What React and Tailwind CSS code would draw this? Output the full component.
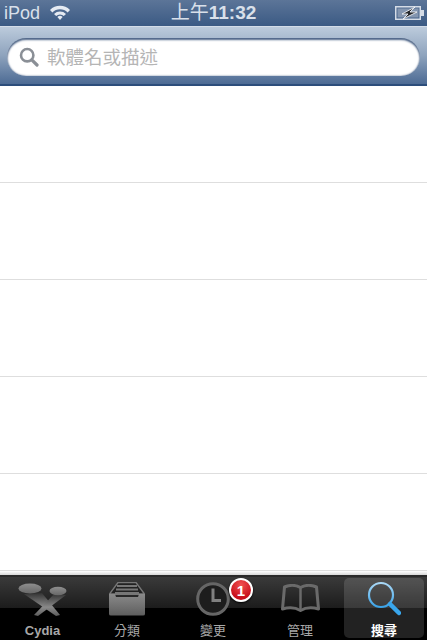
import React from "react";

const cjk = { fontFamily: '"Liberation Sans","Noto Sans CJK TC",sans-serif' };

function Wifi() {
  return (
    <svg width="22" height="16" viewBox="0 0 22 16" className="ml-[9px] mt-[-3px]">
      <path d="M1 6 A14 14 0 0 1 21 6 L18.6 8.4 A10.6 10.6 0 0 0 3.4 8.4 Z" fill="#e6ebf2" />
      <path d="M5 10 A8.6 8.6 0 0 1 17 10 L14.8 12 A5.4 5.4 0 0 0 7.2 12 Z" fill="#e6ebf2" />
      <path d="M8.4 13 A3.8 3.8 0 0 1 13.6 13 L11 16 Z" fill="#e6ebf2" />
    </svg>
  );
}

function Battery() {
  return (
    <svg width="29" height="14" viewBox="0 0 29 14">
      <rect x="0.75" y="0.75" width="24.5" height="12.5" fill="none" stroke="#d5dce6" strokeWidth="1.5" />
      <rect x="2.5" y="2.5" width="21" height="9" fill="#8496b0" />
      <rect x="26" y="4" width="3" height="6" fill="#d5dce6" />
      <path d="M20 1 L7 8 L13 8 L8 13 L22 6 L15 6 Z" fill="#26282c" stroke="#f0f3f7" strokeWidth="0.9" />
    </svg>
  );
}

function SearchGlass() {
  return (
    <svg width="20" height="20" viewBox="0 0 20 20">
      <circle cx="8.2" cy="8.2" r="6.2" fill="none" stroke="#8a8f96" strokeWidth="2.6" />
      <path d="M12.8 12.8 L18 18" stroke="#8a8f96" strokeWidth="3.2" strokeLinecap="round" />
    </svg>
  );
}

function CydiaIcon() {
  return (
    <svg width="54" height="36" viewBox="0 0 54 36">
      <defs>
        <linearGradient id="cyA" x1="0" y1="0" x2="0" y2="1">
          <stop offset="0" stopColor="#333333" />
          <stop offset="0.6" stopColor="#8a8a8a" />
          <stop offset="1" stopColor="#5c5c5c" />
        </linearGradient>
        <linearGradient id="cyB" x1="0" y1="0" x2="0" y2="1">
          <stop offset="0" stopColor="#8e8e8e" />
          <stop offset="1" stopColor="#686868" />
        </linearGradient>
      </defs>
      <path d="M8 13 L26 12 L44 34 L40 35 Z" fill="url(#cyA)" />
      <path d="M38 13 L50 14 L22 35 L18 34 Z" fill="url(#cyA)" />
      <ellipse cx="14" cy="7.5" rx="11.5" ry="5" fill="url(#cyB)" />
      <ellipse cx="42" cy="10" rx="8.5" ry="4.200" fill="url(#cyB)" />
    </svg>
  );
}

function BoxIcon() {
  return (
    <svg width="36" height="34" viewBox="0 0 36 34">
      <defs>
        <linearGradient id="boxA" x1="0" y1="0" x2="0" y2="1">
          <stop offset="0" stopColor="#8a8a8a" />
          <stop offset="1" stopColor="#5e5e5e" />
        </linearGradient>
      </defs>
      <path d="M9 0.5 L27 0.5 L35.5 12 L0.5 12 Z" fill="#222" stroke="#777" strokeWidth="1.4" />
      <rect x="8" y="3" width="20" height="2" fill="#777" />
      <rect x="7" y="6.5" width="22" height="2" fill="#777" />
      <rect x="6" y="10" width="24" height="3" fill="#777" />
      <path d="M0 12 L6 12 L7 15 L29 15 L30 12 L36 12 L36 32 Q36 33.500 34 33.500 L2 33.500 Q0 33.500 0 32 Z" fill="url(#boxA)" />
    </svg>
  );
}

function ClockIcon() {
  return (
    <svg width="34" height="34" viewBox="0 0 34 34">
      <circle cx="17" cy="17" r="15.300" fill="#1d1d1d" stroke="#666" strokeWidth="3" />
      <path d="M17 6.500 L17 18.500 L25 18.500" fill="none" stroke="#808080" strokeWidth="3" />
    </svg>
  );
}

function BookIcon() {
  return (
    <svg width="39" height="29" viewBox="0 0 39 29">
      <path d="M3.500 3 Q12 -0.500 19.500 3.500 Q27 -0.500 35.500 3 L37.500 25 Q27 22 19.500 26.500 Q12 22 1.500 25 Z" fill="none" stroke="#6a6a6a" strokeWidth="3" strokeLinejoin="round" />
      <path d="M19.500 3.500 L19.500 26" stroke="#6a6a6a" strokeWidth="2.500" />
    </svg>
  );
}

function BlueGlass() {
  return (
    <svg width="34" height="36" viewBox="0 0 34 36">
      <defs>
        <linearGradient id="bg" x1="0" y1="0" x2="0" y2="1">
          <stop offset="0" stopColor="#a9d8f6" />
          <stop offset="1" stopColor="#3aa3e8" />
        </linearGradient>
      </defs>
      <circle cx="14" cy="14" r="12" fill="none" stroke="url(#bg)" strokeWidth="2.200" />
      <path d="M23 23 L32 32" stroke="#39a6ec" strokeWidth="4.500" strokeLinecap="round" />
    </svg>
  );
}

function Tab({ label, icon, active, bold, badge, width, color }) {
  return (
    <div
      className={`relative flex flex-col items-center rounded-[5px] ${width} ${active ? "bg-[#ffffff22]" : ""}`}
    >
      <div className="flex h-[41px] items-center justify-center">{icon}</div>
      <span
        className={`mt-[5px] text-[13px] leading-[14px] ${bold ? "font-bold" : ""} ${color}`}
        style={cjk}
      >
        {label}
      </span>
      {badge}
    </div>
  );
}

export default function App() {
  return (
    <div className="flex h-[640px] w-[427px] flex-col overflow-hidden bg-white" style={cjk}>
      <div className="relative flex h-[26px] items-center bg-gradient-to-b from-[#5c7598] to-[#3b5a84] pl-[4px] pr-[3px]">
        <span className="text-[18px] leading-[26px] text-[#d9e0ea]">iPod</span>
        <Wifi />
        <span className="absolute left-0 right-0 text-center text-[19px] leading-[26px] font-bold text-[#d9e0ea]">
          <span className="font-normal">上午</span>11:32
        </span>
        <div className="ml-auto flex items-center">
          <Battery />
        </div>
      </div>

      <div className="flex h-[60px] flex-col border-t border-[#d3dce8] border-b-2 border-b-[#2c4d7b] bg-gradient-to-b from-[#bccbdc] via-[#8ea3bd] to-[#4d6b94] px-[7px] pt-[11px]">
        <div className="flex h-[38px] items-center rounded-full bg-white pl-[12px] shadow-[inset_0_2px_2px_#4f6688,inset_0_0_2px_#5a7090]">
          <SearchGlass />
          <span className="ml-[8px] pt-[1px] text-[18.5px] text-[#b5b5b5]" style={cjk}>
            軟體名或描述
          </span>
        </div>
      </div>

      <div className="flex flex-1 flex-col bg-white">
        <div className="h-[97px] border-b border-[#dedede]" />
        <div className="h-[97px] border-b border-[#dedede]" />
        <div className="h-[97px] border-b border-[#dedede]" />
        <div className="h-[97px] border-b border-[#dedede]" />
        <div className="h-[97px] border-b border-[#dedede]" />
        <div className="flex-1 bg-gradient-to-b from-white to-[#d8d8d8]" />
      </div>

      <div className="flex h-[65px] border-t-2 border-[#2a2a2a] bg-[linear-gradient(#3a3a3a,#1c1c1c_49%,#000_49%,#000)] pt-[1px] pb-[2px] pl-[1px] pr-[3px]">
        <Tab width="w-[83px]" label="Cydia" bold color="text-[#a8a8a8]" icon={<CydiaIcon />} />
        <Tab width="w-[86px]" label="分類" color="text-[#a8a8a8]" icon={<BoxIcon />} />
        <Tab
          width="w-[86px]"
          label="變更"
          color="text-[#a8a8a8]"
          icon={<ClockIcon />}
          badge={
            <div className="absolute left-[59px] top-[0px] flex h-[24px] w-[24px] items-center justify-center rounded-full border-2 border-white bg-[radial-gradient(circle_at_50%_25%,#f25050,#c8101c_70%)] text-[15px] font-bold leading-none text-white shadow-[0_1px_2px_#000]">
              1
            </div>
          }
        />
        <Tab width="w-[88px]" label="管理" color="text-[#a8a8a8]" icon={<BookIcon />} />
        <Tab width="w-[80px]" label="搜尋" bold active color="text-white" icon={<BlueGlass />} />
      </div>
    </div>
  );
}
